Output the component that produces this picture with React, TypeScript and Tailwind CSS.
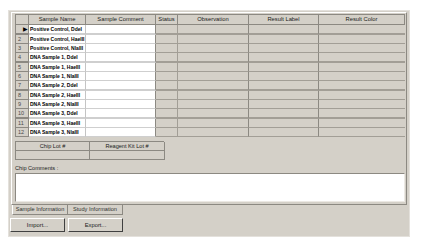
import React from "react";

const rows = [
  "Positive Control, DdeI",
  "Positive Control, HaeIII",
  "Positive Control, NlaIII",
  "DNA Sample 1, DdeI",
  "DNA Sample 1, HaeIII",
  "DNA Sample 1, NlaIII",
  "DNA Sample 2, DdeI",
  "DNA Sample 2, HaeIII",
  "DNA Sample 2, NlaIII",
  "DNA Sample 3, DdeI",
  "DNA Sample 3, HaeIII",
  "DNA Sample 3, NlaIII",
];

const headers = [
  { label: "", cls: "w-[13px]" },
  { label: "Sample Name", cls: "w-[57px]" },
  { label: "Sample Comment", cls: "w-[70px]" },
  { label: "Status", cls: "w-[22px]" },
  { label: "Observation", cls: "w-[71px]" },
  { label: "Result Label", cls: "w-[70px]" },
  { label: "Result Color", cls: "w-[86px]" },
];

const GridRow = ({ name, index }: { name: string; index: number }) => {
  // every third row the scaled-down screenshot shows a heavier line
  const heavy = index % 3 === 0;
  const h = heavy ? "h-[10px] border-b-2" : "h-[9px] border-b";
  return (
    <div className="flex">
      <div
        className={`${h} w-[13px] shrink-0 bg-[#d4d0c8] border-r border-[#8c8982] text-[#4a4a4a] text-[5.5px] leading-[8px] pl-[2px] flex items-center`}
      >
        {index === 0 ? (
          <span className="ml-[5px] text-black text-[6px]">▶</span>
        ) : (
          index + 1
        )}
      </div>
      <div
        className={`${h} w-[57px] shrink-0 bg-white border-r border-[#c4c4c4] border-b-[#cfcfcf] font-bold text-[5px] leading-[8px] pl-[1px] flex items-center whitespace-nowrap overflow-hidden`}
      >
        {name}
      </div>
      <div className={`${h} w-[70px] shrink-0 bg-white border-r border-[#8c8982] border-b-[#cfcfcf]`} />
      <div className={`${h} w-[22px] shrink-0 bg-[#d4d0c8] border-r border-[#a29e96]`} />
      <div className={`${h} w-[71px] shrink-0 bg-[#d4d0c8] border-r border-[#8c8982] border-b-[#a29e96]`} />
      <div className={`${h} w-[70px] shrink-0 bg-[#d4d0c8] border-r border-[#8c8982] border-b-[#a29e96]`} />
      <div className={`${h} w-[86px] shrink-0 bg-[#d4d0c8] border-[#a29e96]`} />
    </div>
  );
};

const App = () => {
  return (
    <div
      className="w-[423px] h-[248px] bg-white pt-[10px] pl-[8px] overflow-hidden text-black"
      style={{ fontFamily: '"Liberation Sans", Arial, sans-serif' }}
    >
      <div className="w-[402px] h-[227px] bg-[#d4d0c8] border border-[#e4e1dc] flex flex-col">
        {/* tab page */}
        <div className="ml-[2px] mt-[1px] w-[396px] h-[193px] border-t border-l border-white border-r border-b border-r-[#8c8982] border-b-[#8c8982] pl-[3px] pt-[1px] flex flex-col">
          {/* data grid */}
          <div className="w-[390px] border-t border-l border-[#8c8982] flex flex-col">
            <div className="flex h-[10px]">
              {headers.map((hd, i) => (
                <div
                  key={i}
                  className={`${hd.cls} shrink-0 h-[10px] bg-[#d4d0c8] border-r border-b border-[#8c8982] text-[5.8px] leading-[9px] text-center text-[#202020] whitespace-nowrap overflow-hidden`}
                >
                  {hd.label}
                </div>
              ))}
            </div>
            {rows.map((r, i) => (
              <GridRow key={i} name={r} index={i} />
            ))}
          </div>

          {/* chip lot table */}
          <div className="mt-[4px] w-[149px] flex flex-col border-l border-t border-[#8c8982]">
            <div className="flex h-[9px]">
              <div className="w-[74px] shrink-0 border-r border-b border-[#8c8982] text-[5.6px] leading-[8px] text-center text-[#202020]">
                Chip Lot #
              </div>
              <div className="w-[75px] shrink-0 border-r border-b border-[#8c8982] text-[5.6px] leading-[8px] text-center text-[#202020]">
                Reagent Kit Lot #
              </div>
            </div>
            <div className="flex h-[9px]">
              <div className="w-[74px] shrink-0 border-r border-b border-[#8c8982]" />
              <div className="w-[75px] shrink-0 border-r border-b border-[#8c8982]" />
            </div>
          </div>

          <div className="mt-[5px] text-[5.6px] leading-[7px] text-[#202020]">Chip Comments :</div>
          <div className="mt-[1px] w-[390px] h-[29px] bg-white border-t border-l border-[#8c8982] border-r border-b border-r-[#ece9e4] border-b-[#ece9e4]" />
        </div>

        {/* tabs */}
        <div className="flex ml-[3px] h-[10px]">
          <div className="w-[56px] h-[10px] text-[5.6px] leading-[8px] text-center text-[#303030] border-l border-white border-r border-r-[#8c8982] border-b border-b-[#8c8982]">
            Sample Information
          </div>
          <div className="w-[55px] h-[10px] text-[5.6px] leading-[9px] text-center text-[#303030] border-r border-r-[#8c8982] border-b border-b-[#8c8982]">
            Study Information
          </div>
        </div>

        {/* buttons */}
        <div className="flex gap-[3px] ml-[1px] mt-[3px]">
          <div className="w-[55px] h-[14px] border border-white border-r-[#404040] border-b-[#404040] text-[5.8px] leading-[12px] text-center text-[#202020]">
            Import...
          </div>
          <div className="w-[55px] h-[14px] border border-white border-r-[#404040] border-b-[#404040] text-[5.8px] leading-[12px] text-center text-[#202020]">
            Export...
          </div>
        </div>
      </div>
    </div>
  );
};

export default App;
